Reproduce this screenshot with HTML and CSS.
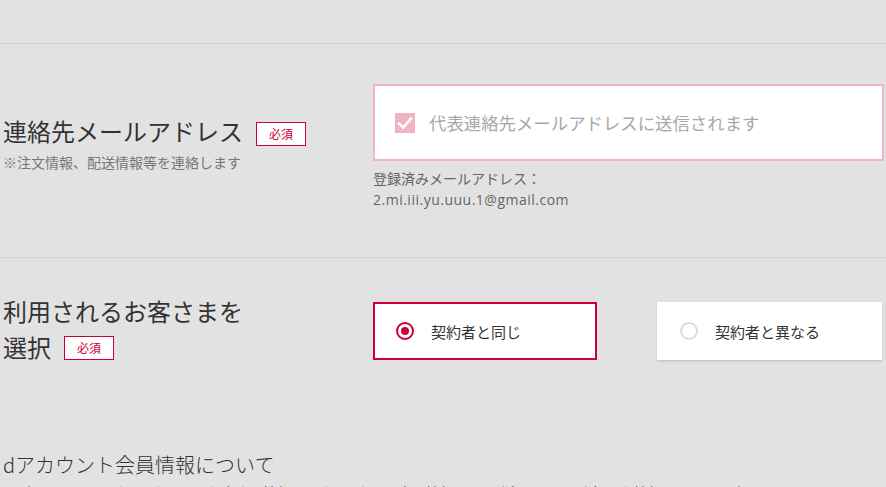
FILE: index.html
```html
<!DOCTYPE html>
<html lang="ja">
<head>
<meta charset="utf-8">
<link rel="stylesheet" href="styles.css">
</head>
<body>
<div class="page">
  <div class="top-space"></div>
  <section class="row row-mail">
    <div class="label">
      <div class="title">連絡先メールアドレス<span class="badge">必須</span></div>
      <div class="note">※注文情報、配送情報等を連絡します</div>
    </div>
    <div class="field">
      <div class="checkbox-box">
        <span class="check">
          <svg viewBox="0 0 20 20" width="20" height="20"><path d="M4 10.5 L8.2 14.5 L16 5.5" fill="none" stroke="#fff" stroke-width="2.6" stroke-linecap="square"/></svg>
        </span>
        <span class="check-label">代表連絡先メールアドレスに送信されます</span>
      </div>
      <div class="registered">登録済みメールアドレス：<br><span class="email">2.mi.iii.yu.uuu.1@gmail.com</span></div>
    </div>
  </section>
  <section class="row row-user">
    <div class="label">
      <div class="title tall">利用されるお客さまを<br>選択<span class="badge">必須</span></div>
    </div>
    <div class="field radios">
      <div class="radio selected"><span class="dot"></span><span class="radio-label">契約者と同じ</span></div>
      <div class="radio"><span class="dot"></span><span class="radio-label">契約者と異なる</span></div>
    </div>
  </section>
  <section class="info">
    <h2 class="info-title">dアカウント会員情報について</h2>
    <p class="info-text">ログインしているdアカウントのお客さま情報を、dアカウント会員情報として登録します。登録した情報はあとから変更できます。</p>
  </section>
</div>
</body>
</html>
```
FILE: styles.css
```css
html, body {
  margin: 0;
  padding: 0;
  background: #e2e2e2;
}
body {
  font-family: "Noto Sans CJK JP", "Noto Sans", sans-serif;
  color: #333;
  overflow: hidden;
}
.page {
  width: 886px;
  height: 487px;
  overflow: hidden;
}
.top-space {
  height: 43px;
}
.row {
  display: grid;
  grid-template-columns: 373px 1fr;
  border-top: 1px solid #d2d2d2;
}
.row > .label {
  padding-left: 3px;
}
.row-mail {
  padding-top: 40px;
  padding-bottom: 47px;
}
.title {
  font-size: 24px;
  line-height: 32px;
  color: #333;
  display: flex;
  align-items: center;
  white-space: nowrap;
}
.row-mail .title {
  margin-top: 31px;
}
.badge {
  display: inline-flex;
  align-items: center;
  justify-content: center;
  width: 50px;
  height: 24px;
  box-sizing: border-box;
  border: 1px solid #cc0033;
  background: #fff;
  color: #cc0033;
  font-size: 12px;
  line-height: 1;
  margin-left: 13px;
  margin-top: 5px;
}
.note {
  font-size: 14px;
  line-height: 20px;
  color: #777;
  margin-top: 5px;
}
.field {
  width: 511px;
}
.checkbox-box {
  box-sizing: border-box;
  height: 77px;
  border: 2px solid #f0b4c4;
  background: #fff;
  display: flex;
  align-items: center;
  padding-left: 20px;
}
.check {
  width: 20px;
  height: 20px;
  background: #f1b2c2;
  display: block;
  flex: none;
}
.check svg {
  display: block;
}
.check-label {
  margin-left: 14px;
  font-size: 17.4px;
  color: #a8a8a8;
  white-space: nowrap;
}
.registered {
  margin-top: 7px;
  font-size: 14px;
  line-height: 21px;
  color: #666;
}
.email {
  font-family: "Open Sans", "Noto Sans", sans-serif;
  letter-spacing: 0.5px;
}
.row-user {
  padding-top: 35px;
}
.title.tall {
  display: block;
  line-height: 36px;
}
.title.tall .badge {
  vertical-align: middle;
  margin-top: -4px;
}
.radios {
  display: flex;
  gap: 60px;
  margin-top: 9px;
  align-self: start;
}
.radio {
  box-sizing: border-box;
  width: 225px;
  height: 58px;
  background: #fff;
  border: 2px solid transparent;
  box-shadow: 0 1px 2px rgba(0, 0, 0, 0.18);
  display: flex;
  align-items: center;
  padding-left: 21px;
}
.radio.selected {
  width: 224px;
  border-color: #cc0033;
  box-shadow: none;
}
.dot {
  box-sizing: border-box;
  width: 18px;
  height: 18px;
  border-radius: 50%;
  border: 2px solid #dcdcdc;
  flex: none;
  position: relative;
}
.radio.selected .dot {
  border-color: #cc0033;
}
.radio.selected .dot::after {
  content: "";
  position: absolute;
  left: 3px;
  top: 3px;
  width: 8px;
  height: 8px;
  border-radius: 50%;
  background: #cc0033;
}
.radio-label {
  margin-left: 17px;
  font-size: 15px;
  color: #333;
  white-space: nowrap;
}
.info {
  padding-left: 3px;
  padding-top: 86px;
}
.info-title {
  margin: 0;
  font-size: 20px;
  font-weight: 300;
  line-height: 28px;
  color: #333;
  white-space: nowrap;
}
.info-text {
  margin: 2px 0 0;
  font-size: 14px;
  line-height: 22px;
  color: #555;
  white-space: nowrap;
}
```
